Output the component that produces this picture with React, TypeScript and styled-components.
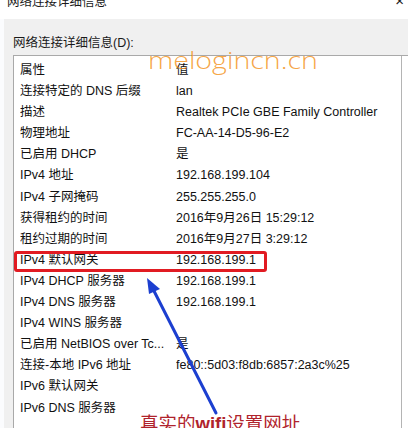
import * as React from 'react';
import styled, { createGlobalStyle } from 'styled-components';

const GlobalStyle = createGlobalStyle`
    html, body {
        margin: 0;
        padding: 0;
        background: #ffffff;
    }
    body {
        font-family: "Liberation Sans", "Noto Sans CJK SC", sans-serif;
        color: #111111;
    }
`;

const Page = styled.div`
    position: relative;
    width: 408px;
    height: 428px;
    overflow: hidden;
    background: #fbfcfe;
`;

const TitleBar = styled.div`
    height: 19px;
    display: flex;
    justify-content: space-between;
    align-items: flex-start;
    background: #ffffff;
    padding: 0 4px 0 7px;
`;

const TitleText = styled.div`
    margin-top: -5px;
    font-size: 12.5px;
    line-height: 14px;
    color: #1a1a1a;
`;

const CloseGlyph = styled.div`
    margin-top: -6px;
    font-size: 15px;
    line-height: 14px;
    color: #222222;
`;

const Panel = styled.div`
    margin-left: 4px;
    height: 409px;
    background: #f0f0f0;
    padding: 16px 0 0 9px;
`;

const GroupLabel = styled.div`
    font-size: 12.5px;
    line-height: 16px;
    color: #1a1a1a;
    margin-bottom: 4px;
`;

const ListBox = styled.div`
    position: relative;
    height: 400px;
    background: #ffffff;
    border: 1px solid #a9a9a9;
    border-right: none;
    box-shadow: inset -6px 0 0 #ffffff, inset -7px 0 0 #b4b4b4;
    padding-top: 4px;
`;

const Row = styled.div`
    position: relative;
    display: grid;
    grid-template-columns: 156px 1fr;
    height: 21.1px;
    line-height: 21px;
    padding-left: 6px;
    font-size: 12.5px;
    white-space: nowrap;
`;

const Cell = styled.span`
    overflow: hidden;
`;

const Highlight = styled.div`
    position: absolute;
    left: 0;
    top: 1px;
    width: 253px;
    height: 21px;
    box-sizing: border-box;
    border: 3px solid #e11b22;
    border-radius: 3px;
`;

const Watermark = styled.div`
    position: absolute;
    left: 148px;
    top: 45px;
    font-family: "Open Sans", "Liberation Sans", sans-serif;
    font-weight: 300;
    font-size: 24px;
    line-height: 30px;
    color: rgba(244, 150, 38, 0.85);
    transform: scaleX(1.19);
    transform-origin: left center;
    white-space: nowrap;
`;

const Caption = styled.div`
    position: absolute;
    left: 140px;
    top: 411px;
    font-family: "Noto Sans CJK SC", sans-serif;
    font-size: 18.5px;
    line-height: 22px;
    color: #b0232c;
    white-space: nowrap;
`;

const Bold = styled.b`
    font-family: "Liberation Sans", sans-serif;
    font-weight: 700;
`;

const ArrowSvg = styled.svg`
    position: absolute;
    left: 0;
    top: 0;
    pointer-events: none;
`;

const rows: [string, string][] = [
    ['属性', '值'],
    ['连接特定的 DNS 后缀', 'lan'],
    ['描述', 'Realtek PCIe GBE Family Controller'],
    ['物理地址', 'FC-AA-14-D5-96-E2'],
    ['已启用 DHCP', '是'],
    ['IPv4 地址', '192.168.199.104'],
    ['IPv4 子网掩码', '255.255.255.0'],
    ['获得租约的时间', '2016年9月26日 15:29:12'],
    ['租约过期的时间', '2016年9月27日 3:29:12'],
    ['IPv4 默认网关', '192.168.199.1'],
    ['IPv4 DHCP 服务器', '192.168.199.1'],
    ['IPv4 DNS 服务器', '192.168.199.1'],
    ['IPv4 WINS 服务器', ''],
    ['已启用 NetBIOS over Tc...', '是'],
    ['连接-本地 IPv6 地址', 'fe80::5d03:f8db:6857:2a3c%25'],
    ['IPv6 默认网关', ''],
    ['IPv6 DNS 服务器', ''],
];

export default function App() {
    return (
        <Page>
            <GlobalStyle />
            <TitleBar>
                <TitleText>网络连接详细信息</TitleText>
                <CloseGlyph>×</CloseGlyph>
            </TitleBar>
            <Panel>
                <GroupLabel>网络连接详细信息(D):</GroupLabel>
                <ListBox>
                    {rows.map(([name, value], i) => (
                        <Row key={i}>
                            <Cell>{name}</Cell>
                            <Cell>{value}</Cell>
                            {i === 9 && <Highlight />}
                        </Row>
                    ))}
                </ListBox>
            </Panel>

            <Watermark>melogincn.cn</Watermark>

            <ArrowSvg width="408" height="428" viewBox="0 0 408 428">
                <line x1="216" y1="413" x2="154" y2="291" stroke="#1c3fd0" strokeWidth="3" strokeLinecap="round" />
                <polygon points="147,278 160,289 149,294" fill="#1c3fd0" />
            </ArrowSvg>

            <Caption>
                真实的<Bold>wifi</Bold>设置网址
            </Caption>
        </Page>
    );
}
